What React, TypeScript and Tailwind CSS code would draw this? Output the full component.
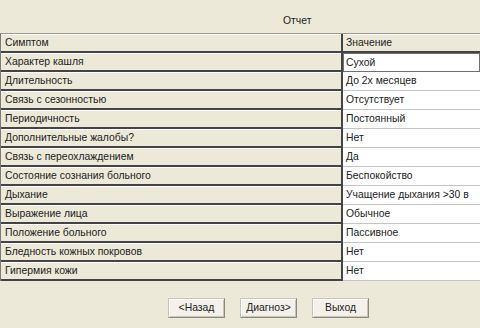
import React from "react";

const rows: [string, string][] = [
  ["Характер кашля", "Сухой"],
  ["Длительность", "До 2х месяцев"],
  ["Связь с сезонностью", "Отсутствует"],
  ["Периодичность", "Постоянный"],
  ["Дополнительные жалобы?", "Нет"],
  ["Связь с переохлаждением", "Да"],
  ["Состояние сознания больного", "Беспокойство"],
  ["Дыхание", "Учащение дыхания >30 в"],
  ["Выражение лица", "Обычное"],
  ["Положение больного", "Пассивное"],
  ["Бледность кожных покровов", "Нет"],
  ["Гипермия кожи", "Нет"],
];

function Btn({ label }: { label: string }) {
  return (
    <div className="w-[57px] h-[20px] border border-t-[#c8c5b8] border-l-[#c8c5b8] border-r-[#8a8a84] border-b-[#8a8a84] bg-[#f3f1e9] shadow-[inset_1px_1px_0_#ffffff,inset_-1px_-1px_0_#c9c5b4] flex items-center justify-center text-[#222]">
      {label}
    </div>
  );
}

export default function App() {
  return (
    <div
      className="w-[480px] h-[328px] bg-[#ece9d8] overflow-hidden flex flex-col text-[10.4px] text-[#222]"
      style={{ fontFamily: '"Liberation Sans", Arial, sans-serif' }}
    >
      <div className="h-[33px] pl-[283px] pt-[14px] leading-[13px]">Отчет</div>
      <div className="flex flex-col border-t border-[#9a9a90] border-l border-l-[#7a7a7a]">
        <div className="flex h-[19px]">
          <div className="w-[342px] shrink-0 flex items-center pl-[4px] border-b-2 border-b-[#444] border-r-2 border-r-[#444] shadow-[inset_0_1px_0_#ffffff]">
            Симптом
          </div>
          <div className="flex-1 flex items-center pl-[3px] border-b-2 border-b-[#444] shadow-[inset_0_1px_0_#ffffff]">
            Значение
          </div>
        </div>
        {rows.map(([a, b], i) => (
          <div key={i} className="flex h-[19px]">
            <div className="w-[342px] shrink-0 flex items-center pl-[4px] border-b-2 border-b-[#444] border-r-2 border-r-[#444] shadow-[inset_0_1px_0_#ffffff]">
              {a}
            </div>
            {i === 0 ? (
              <div className="flex-1 flex items-center pl-[2px] bg-white border border-[#707070]">
                {b}
              </div>
            ) : (
              <div className="flex-1 flex items-center pl-[3px] bg-white border-b border-b-[#c4c4c4]">
                {b}
              </div>
            )}
          </div>
        ))}
      </div>
      <div className="flex pl-[168px] gap-[15px] mt-[17px]">
        <Btn label="<Назад" />
        <Btn label="Диагноз>" />
        <Btn label="Выход" />
      </div>
    </div>
  );
}
